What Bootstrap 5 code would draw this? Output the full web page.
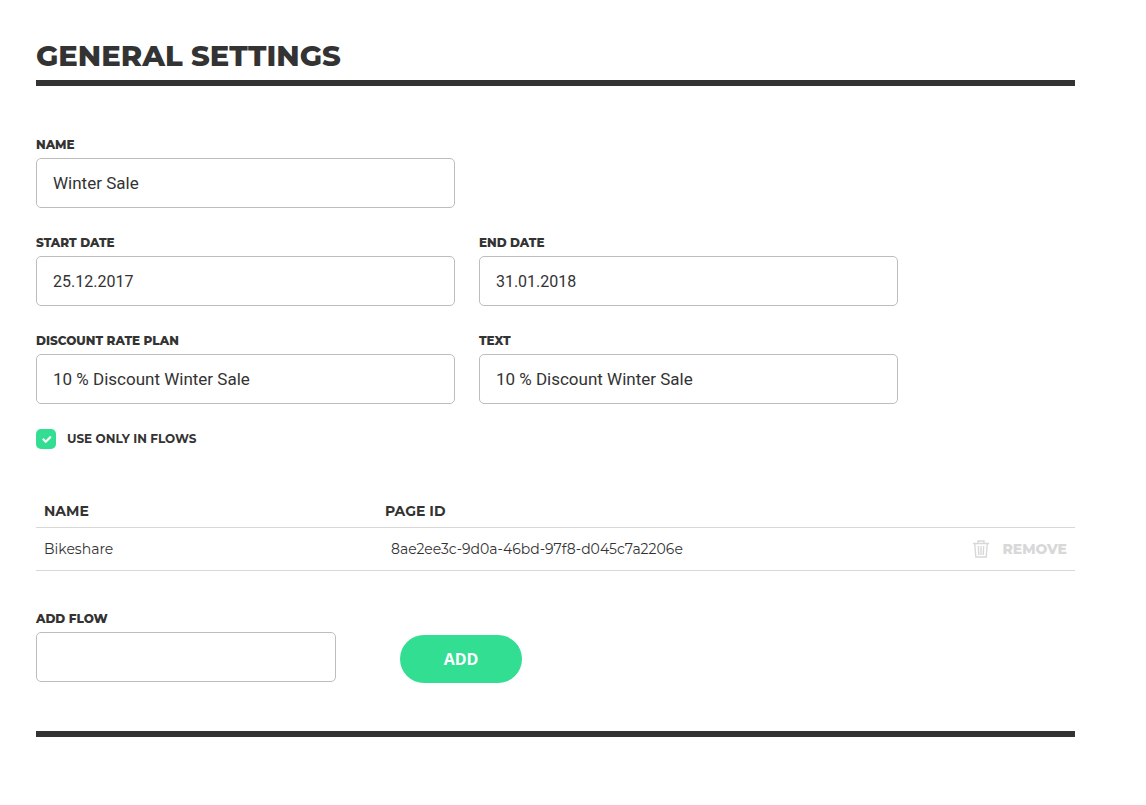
<!DOCTYPE html>
<html lang="en">
<head>
<meta charset="utf-8">
<meta name="viewport" content="width=device-width, initial-scale=1">
<title>General Settings</title>
<link href="https://cdn.jsdelivr.net/npm/bootstrap@5.3.0/dist/css/bootstrap.min.css" rel="stylesheet">
<style>
  :root { --ink: #333; --accent: #32de92; --muted: #d8d8d8; }
  body { font-family: Montserrat, Inter, "Open Sans", sans-serif; color: var(--ink); background: #fff; }
  .settings { padding: 36px 71px 36px 36px; }
  .page-title { font-size: 29px; line-height: 40px; font-weight: 800; padding-bottom: 4px; margin-bottom: 50px; border-bottom: 6px solid var(--ink); }
  .field-row { margin-bottom: 26px; }
  .form-label { display: block; font-size: 12px; line-height: 18px; font-weight: 800; margin-bottom: 4px; }
  .check-row { margin-top: -1px; }
  .check-row .form-label { font-weight: 700; margin: 0 0 0 11px; }
  .form-control { height: 50px; padding: 0 16px; font-family: Roboto, sans-serif; font-size: 17px; font-weight: 400; color: var(--ink); border: 1px solid #bdbdbd; border-radius: 5px; }
  .date-input { font-size: 16px; }
  .form-check-input { width: 20px; height: 20px; margin: 0; border: 0; }
  .form-check-input[type=checkbox] { border-radius: 5px; }
  .form-check-input:checked { background-color: var(--accent); background-size: 15px; }
  .flow-table { color: var(--ink); font-size: 14px; line-height: 20px; margin: 52px 0 39px; border-color: var(--muted); table-layout: fixed; }
  .flow-table > :not(caption) > * > * { padding: 0 8px; height: 43px; vertical-align: middle; color: inherit; }
  .flow-table > thead > tr > * { height: 26px; padding-bottom: 6px; font-weight: 700; }
  .flow-table > tbody > tr > .page-id { padding-left: 14px; }
  .col-name { width: 341px; }
  .col-action { width: 160px; }
  .btn-remove { color: var(--muted); font-size: 14px; line-height: 20px; font-weight: 800; }
  .flow-input { width: 300px; }
  .add-row { gap: 64px; }
  .btn-add { width: 122px; height: 48px; margin-bottom: -1px; background: var(--accent); color: #fff; font-family: "Open Sans", sans-serif; font-size: 16px; font-weight: 700; }
  .btn-add:hover { background: #2bc982; color: #fff; }
  .end-rule { height: 6px; margin: 49px 0 0; border: 0; background: var(--ink); opacity: 1; }
</style>
</head>
<body>
<main class="settings">
  <h1 class="page-title">GENERAL SETTINGS</h1>
  <form>
    <div class="row field-row">
      <div class="col-5">
        <label class="form-label" for="name">NAME</label>
        <input class="form-control" id="name" type="text" value="Winter Sale">
      </div>
    </div>
    <div class="row field-row">
      <div class="col-5">
        <label class="form-label" for="start">START DATE</label>
        <input class="form-control date-input" id="start" type="text" value="25.12.2017">
      </div>
      <div class="col-5">
        <label class="form-label" for="end">END DATE</label>
        <input class="form-control date-input" id="end" type="text" value="31.01.2018">
      </div>
    </div>
    <div class="row field-row">
      <div class="col-5">
        <label class="form-label" for="plan">DISCOUNT RATE PLAN</label>
        <input class="form-control" id="plan" type="text" value="10 % Discount Winter Sale">
      </div>
      <div class="col-5">
        <label class="form-label" for="text">TEXT</label>
        <input class="form-control" id="text" type="text" value="10 % Discount Winter Sale">
      </div>
    </div>
    <div class="check-row d-flex align-items-center">
      <input class="form-check-input" id="flows" type="checkbox" checked>
      <label class="form-label" for="flows">USE ONLY IN FLOWS</label>
    </div>

    <table class="table flow-table">
      <colgroup><col class="col-name"><col><col class="col-action"></colgroup>
      <thead>
        <tr><th scope="col">NAME</th><th scope="col">PAGE ID</th><td></td></tr>
      </thead>
      <tbody>
        <tr>
          <td>Bikeshare</td>
          <td class="page-id">8ae2ee3c-9d0a-46bd-97f8-d045c7a2206e</td>
          <td>
            <button class="btn btn-remove border-0 p-0 d-flex align-items-center gap-2 ms-auto" type="button">
              <svg class="me-1" width="18" height="18" viewBox="0 0 18 18" fill="none" stroke="currentColor" aria-hidden="true">
                <path d="M1 3.500h16M6 3V1h6v2M2.800 4l1 13h10.400l1-13M6.300 6l.5 9M9 6v9M11.700 6l-.5 9" stroke-width="1.400"/>
              </svg>
              REMOVE
            </button>
          </td>
        </tr>
      </tbody>
    </table>

    <div class="add-row d-flex align-items-end">
      <div class="flow-input">
        <label class="form-label" for="flow">ADD FLOW</label>
        <input class="form-control" id="flow" type="text">
      </div>
      <button class="btn btn-add rounded-pill border-0" type="button">ADD</button>
    </div>
  </form>
  <hr class="end-rule">
</main>
<script src="https://cdn.jsdelivr.net/npm/bootstrap@5.3.0/dist/js/bootstrap.bundle.min.js"></script>
</body>
</html>
